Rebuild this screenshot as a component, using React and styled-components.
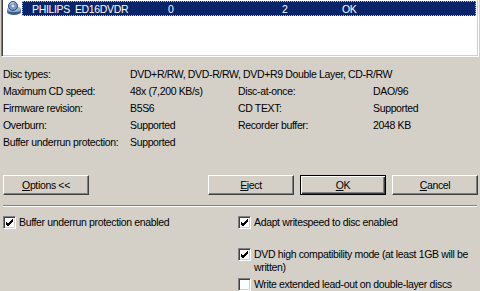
import React from 'react';
import styled, { createGlobalStyle } from 'styled-components';

const GlobalStyle = createGlobalStyle`
  html, body {
    margin: 0;
    padding: 0;
    background: #D4D0C8;
  }
  body {
    font-family: "Liberation Sans", Arial, sans-serif;
    font-size: 10.5px;
    letter-spacing: -0.35px;
    color: #000;
  }
`;

const info = [
  ['Maximum CD speed:', '48x (7,200 KB/s)', 'Disc-at-once:', 'DAO/96'],
  ['Firmware revision:', 'B5S6', 'CD TEXT:', 'Supported'],
  ['Overburn:', 'Supported', 'Recorder buffer:', '2048 KB'],
  ['Buffer underrun protection:', 'Supported', '', ''],
];

function DriveIcon() {
  return (
    <svg width="16" height="15" viewBox="0 0 16 15">
      <ellipse cx="8" cy="11" rx="7" ry="3" fill="#3c5a8c" />
      <rect x="1" y="8" width="14" height="3" fill="#5b7bb0" />
      <ellipse cx="8" cy="8" rx="7" ry="3" fill="#9fb4d8" />
      <circle cx="7" cy="5" r="4.5" fill="#7f97c4" stroke="#2e4a7c" strokeWidth="1" />
      <circle cx="7" cy="5" r="1.3" fill="#e8eef8" />
      <path d="M4 3.5 A3.5 3.5 0 0 1 8 1.8" stroke="#dfe7f5" strokeWidth="1" fill="none" />
    </svg>
  );
}

function CheckBox({ checked }) {
  return (
    <Box>
      {checked && (
        <svg width="9" height="9" viewBox="0 0 9 9">
          <path d="M1 4 L3 6 L8 1 M1 5 L3 7 L8 2 M1 6 L3 8 L8 3" stroke="#000" strokeWidth="1" fill="none" />
        </svg>
      )}
    </Box>
  );
}

function Mn({ k, rest }) {
  return (
    <span>
      <u>{k}</u>
      {rest}
    </span>
  );
}

export default function App() {
  return (
    <>
      <GlobalStyle />
      <Window>
        <ListBox>
          <ListRow>
            <IconCell>
              <DriveIcon />
            </IconCell>
            <Selected>
              <Cell w={136}>PHILIPS&nbsp; ED16DVDR</Cell>
              <Cell w={114}>0</Cell>
              <Cell w={60}>2</Cell>
              <Cell>OK</Cell>
            </Selected>
          </ListRow>
        </ListBox>

        <InfoGrid>
          <Label>Disc types:</Label>
          <Value span={3}>DVD+R/RW, DVD-R/RW, DVD+R9 Double Layer, CD-R/RW</Value>
          {info.map((r) => (
            <React.Fragment key={r[0]}>
              <Label>{r[0]}</Label>
              <Value>{r[1]}</Value>
              <Label>{r[2]}</Label>
              <Value>{r[3]}</Value>
            </React.Fragment>
          ))}
        </InfoGrid>

        <ButtonBar>
          <Button>
            <Mn k="O" rest="ptions <<" />
          </Button>
          <RightButtons>
            <Button>
              <Mn k="E" rest="ject" />
            </Button>
            <Button primary>
              <Mn k="O" rest="K" />
            </Button>
            <Button>
              <Mn k="C" rest="ancel" />
            </Button>
          </RightButtons>
        </ButtonBar>

        <Separator />

        <Options>
          <Check row={1} col={1}>
            <CheckBox checked />
            <span>Buffer underrun protection enabled</span>
          </Check>
          <Check row={1} col={2}>
            <CheckBox checked />
            <span>Adapt writespeed to disc enabled</span>
          </Check>
          <Check row={2} col={2}>
            <CheckBox checked />
            <span>
              DVD high compatibility mode (at least 1GB will be
              <br />
              written)
            </span>
          </Check>
          <Check row={3} col={2}>
            <CheckBox />
            <span>Write extended lead-out on double-layer discs</span>
          </Check>
        </Options>
      </Window>
    </>
  );
}

const Window = styled.div`
  width: 480px;
  height: 291px;
  overflow: hidden;
  display: flex;
  flex-direction: column;
  background: #D4D0C8;
`;

const ListBox = styled.div`
  margin: 0 1px 0 1px;
  height: 57px;
  background: #fff;
  border-left: 1px solid #808080;
  border-right: 1px solid #fff;
  border-bottom: 1px solid #fff;
  box-shadow: inset 1px 0 0 #404040, inset -1px 0 0 #D4D0C8, inset 0 -1px 0 #D4D0C8;
  box-sizing: border-box;
`;

const ListRow = styled.div`
  display: flex;
  height: 15px;
  margin-top: 1px;
  padding-left: 3px;
  padding-right: 2px;
`;

const IconCell = styled.div`
  width: 17px;
  height: 15px;
  display: flex;
  align-items: center;
  justify-content: center;
`;

const Selected = styled.div`
  flex: 1;
  display: flex;
  align-items: center;
  background: #0A246A;
  color: #fff;
  padding-left: 10px;
  outline: 1px dotted #c8c0a0;
  outline-offset: -1px;
`;

const Cell = styled.div`
  width: ${(p) => (p.w ? `${p.w}px` : 'auto')};
  white-space: nowrap;
`;

const InfoGrid = styled.div`
  display: grid;
  grid-template-columns: 127px 108px 135px 1fr;
  grid-auto-rows: 17px;
  align-items: center;
  padding: 8px 0 0 3px;
`;

const Label = styled.div`
  white-space: nowrap;
`;

const Value = styled.div`
  white-space: nowrap;
  grid-column: span ${(p) => p.span || 1};
`;

const ButtonBar = styled.div`
  display: flex;
  align-items: center;
  padding: 0 2px 0 3px;
  margin-top: 25px;
`;

const RightButtons = styled.div`
  margin-left: auto;
  display: flex;
  gap: 6px;
`;

const Button = styled.div`
  width: 86px;
  height: 20px;
  box-sizing: border-box;
  display: flex;
  align-items: center;
  justify-content: center;
  background: #D4D0C8;
  border: 1px solid;
  border-color: ${(p) => (p.primary ? '#000' : '#fff #404040 #404040 #fff')};
  box-shadow: ${(p) =>
    p.primary
      ? 'inset 1px 1px 0 #fff, inset -1px -1px 0 #404040, inset -2px -2px 0 #808080'
      : 'inset -1px -1px 0 #808080'};
  u {
    text-decoration-thickness: 1px;
    text-underline-offset: 1px;
  }
`;

const Separator = styled.div`
  margin: 10px 3px 0 3px;
  height: 1px;
  background: #808080;
  border-bottom: 1px solid #fff;
`;

const Options = styled.div`
  display: grid;
  grid-template-columns: 235px 1fr;
  grid-template-rows: 32px 30px 13px;
  padding: 9px 0 0 3px;
`;

const Check = styled.div`
  grid-row: ${(p) => p.row};
  grid-column: ${(p) => p.col};
  display: flex;
  align-items: flex-start;
  gap: 3px;
  line-height: 13px;
  white-space: nowrap;
`;

const Box = styled.div`
  width: 13px;
  height: 13px;
  flex: none;
  box-sizing: border-box;
  background: #fff;
  border: 1px solid;
  border-color: #808080 #fff #fff #808080;
  box-shadow: inset 1px 1px 0 #404040, inset -1px -1px 0 #D4D0C8;
  display: flex;
  align-items: center;
  justify-content: center;
`;
